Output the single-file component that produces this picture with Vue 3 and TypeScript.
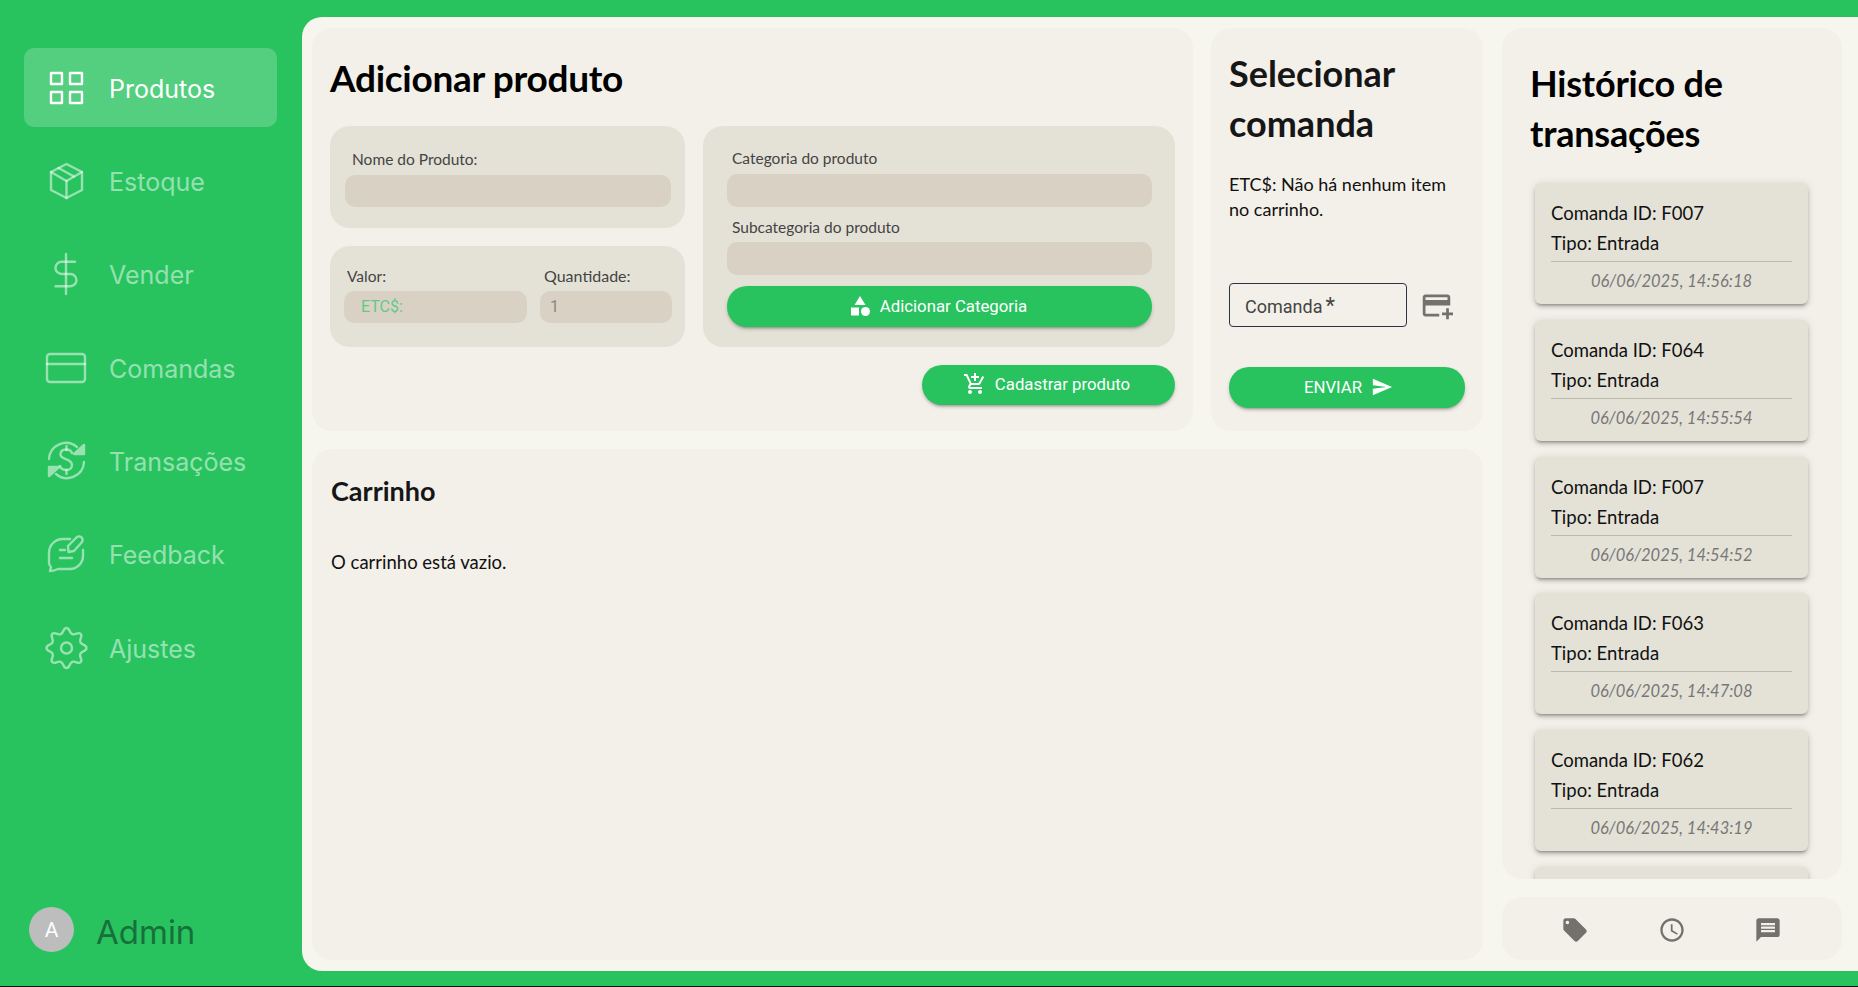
<script setup lang="ts">
interface NavItem {
  label: string;
  paths: string[];
  active?: boolean;
}

interface Transaction {
  id: string;
  date: string;
}

// scalloped gear outline, 8 lobes around the centre of the 44px icon box
function gearPath(cx: number, cy: number, valley: number, peak: number): string {
  const lobes = 16;
  const at = (r: number, a: number) => [cx + r * Math.cos(a), cy + r * Math.sin(a)];
  const step = (Math.PI * 2) / lobes;
  let d = "";
  for (let i = 0; i < lobes; i++) {
    const a0 = i * step - Math.PI / 2;
    const a1 = a0 + step;
    const r0 = i % 2 === 0 ? peak : valley;
    const r1 = i % 2 === 0 ? valley : peak;
    const start = at(r0, a0);
    const end = at(r1, a1);
    const h0 = 3.6 / r0;
    const h1 = 3.6 / r1;
    const c0 = at(r0 / Math.cos(h0), a0 + h0);
    const c1 = at(r1 / Math.cos(h1), a1 - h1);
    if (i === 0) d += `M${start[0].toFixed(2)} ${start[1].toFixed(2)}`;
    d += `C${c0[0].toFixed(2)} ${c0[1].toFixed(2)} ${c1[0].toFixed(2)} ${c1[1].toFixed(2)} ${end[0].toFixed(2)} ${end[1].toFixed(2)}`;
  }
  return d + "Z";
}

const navItems: NavItem[] = [
  {
    label: "Produtos",
    active: true,
    paths: [
      "M7 7h11v11H7z",
      "M26 7h12v11H26z",
      "M7 26h11v11H7z",
      "M26 26h12v11H26z"
    ]
  },
  {
    label: "Estoque",
    paths: [
      "M22.5 5 38 13v18l-15.5 8L7 31V13z",
      "M7 13l15.5 9L38 13",
      "M22.5 22v17",
      "M14.5 9 30 17.5"
    ]
  },
  {
    label: "Vender",
    paths: [
      "M22 2v40",
      "M31 9.75H17.6a6.1 6.1 0 0 0 0 12.25h8.75a6.1 6.1 0 0 1 0 12.25H11.5"
    ]
  },
  {
    label: "Comandas",
    paths: [
      "M6 8h32a3 3 0 0 1 3 3v22a3 3 0 0 1-3 3H6a3 3 0 0 1-3-3V11a3 3 0 0 1 3-3z",
      "M3 18h38"
    ]
  },
  {
    label: "Transações",
    paths: [
      "M5 20A17 17 0 0 1 33 8",
      "M30 15H40V6zM33 13H38V9z",
      "M40 23A17 17 0 0 1 12 35",
      "M15 28H5V37zM12 30H7V34z",
      "M28 14C27 11 24 10.5 22 10.5C18.5 10.5 16.5 12.5 16.5 15.5C16.5 21 28 19.5 28 26C28 29.5 25 31 22.5 31C19.5 31 17 30 16 27",
      "M22.5 7v4M22.5 31v4"
    ]
  },
  {
    label: "Feedback",
    paths: [
      "M26 7H19C11 7 5 13 5 21V31C5 33 6 34 7 35L6 39C10 39 12 38 14 37H26C33 37 39 31 39 24V18",
      "M24 14 32 6a3.5 3.5 0 0 1 6 4L30 19 24.5 20z",
      "M16 18h5",
      "M16 26h12"
    ]
  },
  {
    label: "Ajustes",
    paths: [
      gearPath(22.5, 22, 15, 20),
      "M28 22a5.5 5.5 0 1 1-11 0a5.5 5.5 0 1 1 11 0z"
    ]
  }
];

const transactions: Transaction[] = [
  { id: "F007", date: "06/06/2025, 14:56:18" },
  { id: "F064", date: "06/06/2025, 14:55:54" },
  { id: "F007", date: "06/06/2025, 14:54:52" },
  { id: "F063", date: "06/06/2025, 14:47:08" },
  { id: "F062", date: "06/06/2025, 14:43:19" }
];
</script>

<template>
  <div class="layout">
    <aside class="sidebar">
      <nav class="nav">
        <a
          v-for="item in navItems"
          :key="item.label"
          class="nav__item"
          :class="{ 'nav__item--active': item.active }"
        >
          <svg class="nav__icon" viewBox="0 0 44 44" width="44" height="44">
            <path v-for="d in item.paths" :key="d" :d="d" />
          </svg>
          <span class="nav__label">{{ item.label }}</span>
        </a>
      </nav>
      <div class="user">
        <div class="user__avatar">A</div>
        <span class="user__name">Admin</span>
      </div>
    </aside>

    <main class="panel">
      <div class="content">
        <div class="top">
          <section class="card add">
            <h1 class="add__title">Adicionar produto</h1>
            <div class="add__grid">
              <div class="add__left">
                <div class="block block--name">
                  <label class="label label--name">Nome do Produto:</label>
                  <div class="field"></div>
                </div>
                <div class="block block--values">
                  <div>
                    <label class="label label--value">Valor:</label>
                    <div class="field field--money">ETC$:</div>
                  </div>
                  <div>
                    <label class="label label--qty">Quantidade:</label>
                    <div class="field field--qty">1</div>
                  </div>
                </div>
              </div>
              <div class="block block--category">
                <label class="label label--cat">Categoria do produto</label>
                <div class="field field--cat"></div>
                <label class="label label--cat label--sub">Subcategoria do produto</label>
                <div class="field field--cat"></div>
                <button class="btn btn--category">
                  <svg viewBox="0 0 24 24" width="24" height="24">
                    <path d="M12 2l-5.5 9h11z" />
                    <circle cx="17.5" cy="17.5" r="4.5" />
                    <path d="M3 13.5h8v8H3z" />
                  </svg>
                  Adicionar Categoria
                </button>
              </div>
            </div>
            <div class="add__actions">
              <button class="btn btn--submit">
                <svg viewBox="0 0 24 24" width="24" height="24">
                  <path d="M11 9h2V6h3V4h-3V1h-2v3H8v2h3v3zm-4 9c-1.1 0-1.99.9-1.99 2S5.9 22 7 22s2-.9 2-2-.9-2-2-2zm10 0c-1.1 0-1.99.9-1.99 2s.89 2 1.99 2 2-.9 2-2-.9-2-2-2zm-9.83-3.25l.03-.12.9-1.63h7.45c.75 0 1.41-.41 1.75-1.03l3.86-7.01L19.42 4h-.01l-1.1 2-2.76 5H8.53l-.13-.27L6.16 6l-.95-2-.94-2H1v2h2l3.6 7.59-1.35 2.45c-.16.28-.25.61-.25.96 0 1.1.9 2 2 2h12v-2H7.42c-.13 0-.25-.11-.25-.25z" />
                </svg>
                Cadastrar produto
              </button>
            </div>
          </section>

          <section class="card select">
            <h2 class="select__title">Selecionar comanda</h2>
            <p class="select__text">ETC$: Não há nenhum item no carrinho.</p>
            <div class="select__row">
              <div class="outlined">Comanda<span class="outlined__mark">*</span></div>
              <svg class="select__add" viewBox="0 0 24 24" width="33" height="33">
                <path d="M20 4H4c-1.11 0-1.99.89-1.99 2L2 18c0 1.11.89 2 2 2h10v-2H4v-6h18V6c0-1.11-.89-2-2-2zm0 4H4V6h16v2zm4 9v2h-3v3h-2v-3h-3v-2h3v-3h2v3h3z" />
              </svg>
            </div>
            <button class="btn btn--send">
              ENVIAR
              <svg viewBox="0 0 24 24" width="22" height="22">
                <path d="M2.01 21L23 12 2.01 3 2 10l15 2-15 2z" />
              </svg>
            </button>
          </section>
        </div>

        <section class="card cart">
          <h2 class="cart__title">Carrinho</h2>
          <p class="cart__empty">O carrinho está vazio.</p>
        </section>
      </div>

      <div class="side">
        <section class="card history">
          <h2 class="history__title">Histórico de transações</h2>
          <div class="history__list">
            <article
              v-for="(tx, i) in transactions"
              :key="i"
              class="tx"
            >
              <div class="tx__line">Comanda ID: {{ tx.id }}</div>
              <div class="tx__line">Tipo: Entrada</div>
              <div class="tx__date">{{ tx.date }}</div>
            </article>
            <!--next card, cut off by the panel-->
            <article class="tx"></article>
          </div>
        </section>
        <div class="card tabs">
          <svg viewBox="0 0 24 24" width="28" height="28">
            <path d="M21.41 11.58l-9-9C12.05 2.22 11.55 2 11 2H4c-1.1 0-2 .9-2 2v7c0 .55.22 1.05.59 1.42l9 9c.36.36.86.58 1.41.58.55 0 1.05-.22 1.41-.59l7-7c.37-.36.59-.86.59-1.41 0-.55-.23-1.06-.59-1.42zM5.5 7C4.67 7 4 6.33 4 5.5S4.67 4 5.5 4 7 4.67 7 5.5 6.33 7 5.5 7z" />
          </svg>
          <svg viewBox="0 0 24 24" width="28" height="28">
            <path d="M11.99 2C6.47 2 2 6.48 2 12s4.47 10 9.99 10C17.52 22 22 17.52 22 12S17.52 2 11.99 2zM12 20c-4.42 0-8-3.58-8-8s3.58-8 8-8 8 3.58 8 8-3.58 8-8 8z" />
            <path d="M12.5 7H11v6l5.25 3.15.75-1.23-4.5-2.67z" />
          </svg>
          <svg viewBox="0 0 24 24" width="28" height="28">
            <path d="M20 2H4c-1.1 0-1.99.9-1.99 2L2 22l4-4h14c1.1 0 2-.9 2-2V4c0-1.1-.9-2-2-2zm-2 12H6v-2h12v2zm0-3H6V9h12v2zm0-3H6V6h12v2z" />
          </svg>
        </div>
      </div>
    </main>
  </div>
</template>

<style>
html,
body {
  margin: 0;
  background: #111;
  overflow: hidden;
}
</style>

<style scoped>
.layout {
  display: flex;
  height: 986px;
  background: #28c35f;
  font-family: "Lato", "Liberation Sans", sans-serif;
}

/*SIDEBAR*/
.sidebar {
  width: 302px;
  flex: none;
  box-sizing: border-box;
  padding: 48px 25px 34px 24px;
  display: flex;
  flex-direction: column;
  justify-content: space-between;
}

.nav {
  display: flex;
  flex-direction: column;
  gap: 14.4px;
}

.nav__item {
  height: 79px;
  padding-left: 20px;
  display: flex;
  align-items: center;
  gap: 21px;
  border-radius: 10px;
  color: rgba(255, 255, 255, 0.52);
  font-family: "Inter", sans-serif;
  font-size: 25px;
}

.nav__item--active {
  background: rgba(255, 255, 255, 0.2);
  color: #fff;
}

.nav__label {
  margin-top: 2px;
}

.nav__icon {
  flex: none;
  fill: none;
  stroke: currentColor;
  stroke-width: 2.4;
  stroke-linecap: round;
  stroke-linejoin: round;
}

.user {
  display: flex;
  align-items: center;
  gap: 22px;
  padding-left: 5px;
}

.user__avatar {
  width: 45px;
  height: 45px;
  border-radius: 50%;
  background: #bdbdbd;
  color: #fff;
  display: flex;
  align-items: center;
  justify-content: center;
  font-family: "Roboto", sans-serif;
  font-size: 21px;
}

.user__name {
  margin-top: 4px;
  font-family: "Inter", sans-serif;
  font-size: 33px;
  color: #17703c;
}

/*MAIN PANEL*/
.panel {
  flex: 1;
  margin: 17px 0 15px;
  padding: 11px 16px 11px 10px;
  box-sizing: border-box;
  display: flex;
  gap: 19px;
  background: #f6f6ee;
  border-radius: 20px 0 0 20px;
  min-width: 0;
}

.card {
  background: #f3f0e9;
  border-radius: 20px;
  box-sizing: border-box;
}

.content {
  width: 1171px;
  flex: none;
  display: flex;
  flex-direction: column;
  gap: 18px;
}

.top {
  display: flex;
  gap: 18px;
  height: 403px;
}

/*ADD PRODUCT*/
.add {
  width: 881px;
  padding: 0 18px;
}

.add__title {
  margin: 0;
  padding-top: 27px;
  height: 98px;
  box-sizing: border-box;
  font-size: 37px;
  font-weight: 700;
  letter-spacing: -0.3px;
  line-height: 46px;
  color: #000;
}

.add__grid {
  display: flex;
  gap: 18px;
}

.add__left {
  width: 355px;
  display: flex;
  flex-direction: column;
  gap: 18px;
}

.block {
  background: #e4e2d7;
  border-radius: 20px;
  box-sizing: border-box;
}

.label {
  display: block;
  font-size: 15.5px;
  line-height: 20px;
  margin-bottom: 5px;
  color: #444;
}

.field {
  height: 32px;
  box-sizing: border-box;
  background: #d9d2c4;
  border-radius: 10px;
  font-family: "Roboto", sans-serif;
  font-size: 16px;
  line-height: 32px;
}

.block--name {
  height: 102px;
  padding: 23px 14px 0 15px;
}

.label--name {
  padding-left: 7px;
  margin-bottom: 6px;
}

.block--values {
  height: 101px;
  padding: 20px 13px 0 14px;
  display: grid;
  grid-template-columns: 183px 132px;
  column-gap: 13px;
}

.label--value {
  padding-left: 3px;
}

.label--qty {
  padding-left: 4px;
  font-size: 16px;
}

.field--money {
  padding-left: 17px;
  color: #62c988;
}

.field--qty {
  padding-left: 10px;
  color: #888;
}

.block--category {
  flex: 1;
  height: 221px;
  padding: 22px 23px 0 24px;
}

.label--cat {
  padding-left: 5px;
  margin-bottom: 6px;
}

.label--sub {
  margin: 10px 0 5px;
}

.field--cat {
  height: 33px;
}

.add__actions {
  display: flex;
  justify-content: flex-end;
  margin-top: 18px;
}

.btn {
  border: none;
  padding: 0 0 2px;
  display: flex;
  align-items: center;
  justify-content: center;
  background: #28c35f;
  color: #fff;
  font-family: "Roboto", sans-serif;
  font-size: 16.8px;
  font-weight: 400;
  box-shadow: 0 3px 3px -2px rgba(0, 0, 0, 0.3), 0 2px 4px rgba(0, 0, 0, 0.14);
}

.btn svg {
  flex: none;
  fill: #fff;
}

.btn--category {
  width: 100%;
  height: 41px;
  margin-top: 11px;
  padding-right: 4px;
  gap: 8px;
  border-radius: 20px;
}

.btn--submit {
  width: 253px;
  height: 40px;
  padding-right: 4px;
  gap: 8px;
  border-radius: 20px;
}

/*SELECT COMANDA*/
.select {
  width: 272px;
  padding: 20px 18px 0;
}

.select__title {
  margin: 0;
  font-size: 36px;
  font-weight: 700;
  line-height: 50px;
  color: #161616;
}

.select__text {
  margin: 24px 0 0;
  height: 111px;
  font-size: 18px;
  line-height: 25px;
  color: #111;
}

.select__row {
  display: flex;
  align-items: center;
  gap: 13px;
}

.outlined {
  width: 178px;
  height: 44px;
  box-sizing: border-box;
  padding-left: 15px;
  border: 1px solid #2c3347;
  border-radius: 4px;
  font-family: "Roboto", sans-serif;
  font-size: 18px;
  line-height: 44px;
  color: #444;
}

.outlined__mark {
  margin-left: 3px;
  font-size: 22px;
}

.select__add {
  fill: #73716b;
}

.btn--send {
  width: 236px;
  height: 41px;
  margin-top: 40px;
  padding-left: 3px;
  gap: 9px;
  border-radius: 20px;
}

/*CART*/
.cart {
  flex: 1;
  padding: 24px 19px;
}

.cart__title {
  margin: 0;
  font-size: 27px;
  font-weight: 700;
  line-height: 36px;
  color: #161616;
}

.cart__empty {
  margin: 41px 0 0;
  font-size: 18.5px;
  line-height: 25px;
  color: #111;
}

/*HISTORY*/
.side {
  width: 340px;
  flex: none;
  display: flex;
  flex-direction: column;
  gap: 18px;
}

.history {
  height: 851px;
  padding: 30px 0 0;
  overflow: hidden;
}

.history__title {
  margin: 0;
  padding: 0 28px;
  font-size: 36px;
  font-weight: 700;
  letter-spacing: -0.2px;
  line-height: 50px;
  color: #000;
}

.history__list {
  margin-top: 25px;
  padding: 0 34px 0 33px;
  display: flex;
  flex-direction: column;
  gap: 15.75px;
}

.tx {
  height: 121px;
  flex: none;
  box-sizing: border-box;
  padding: 15px 16px 0;
  background: #e4e2d7;
  border-radius: 6px;
  box-shadow: 0 3px 3px -2px rgba(0, 0, 0, 0.3), 0 3px 4px rgba(0, 0, 0, 0.14), 0 1px 8px rgba(0, 0, 0, 0.12);
  color: #111;
}

.tx__line {
  font-size: 18.5px;
  line-height: 30px;
}

.tx__date {
  margin-top: 3px;
  padding-top: 7px;
  border-top: 1px solid #bcb9ac;
  text-align: center;
  font-size: 16.5px;
  font-style: italic;
  line-height: 24px;
  color: #777;
}

.tabs {
  height: 63px;
  display: flex;
  align-items: center;
  justify-content: space-between;
  padding: 2px 60px 0 59px;
}

.tabs svg {
  fill: #73716b;
}
</style>
